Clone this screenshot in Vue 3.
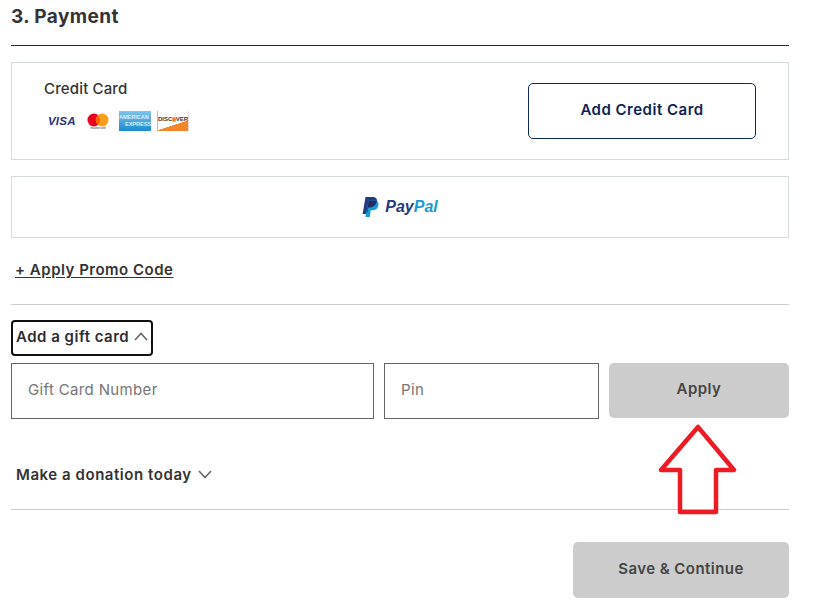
<script setup>
</script>

<template>
  <div class="page">
    <h2 class="title">3. Payment</h2>
    <div class="box card-box">
      <div class="card-info">
        <div class="card-label">Credit Card</div>
        <div class="logos">
          <span class="visa">VISA</span>
          <span class="mc">
            <svg width="22" height="14" viewBox="0 0 24 15">
              <circle cx="7.500" cy="7.500" r="7" fill="#eb001b" />
              <circle cx="16.500" cy="7.500" r="7" fill="#f79e1b" />
              <path d="M12 2.300a7 7 0 0 1 0 10.400a7 7 0 0 1 0-10.400z" fill="#ff5f00" />
            </svg>
            <span class="mc-text">mastercard</span>
          </span>
          <span class="amex"><span>AMERICAN</span><span class="amex-2">EXPRESS</span></span>
          <span class="discover">
            <span class="disc-text">DISC<i class="dot"></i>VER</span>
          </span>
        </div>
      </div>
      <button class="btn-outline">Add Credit Card</button>
    </div>
    <div class="box paypal-box">
      <svg width="17" height="20" viewBox="0 0 17 20">
        <path d="M3.500 0h6.500C14 0 15.600 2 15 5c-.7 3.600-3.200 5.400-6.600 5.400H6.300L5.200 17H.6z" fill="#253b80" />
        <path d="M6.500 3.500h6c3 0 4.500 1.800 3.900 4.700c-.6 3.200-2.800 5-5.900 5H8.700L7.800 20H3.400z" fill="#179bd7" />
        <path d="M6.500 3.500h6c1 0 1.700.2 2.400.6c-.8 3.900-3.300 6.300-6.500 6.300H6.300L5.500 15H4.900z" fill="#222d65" />
      </svg>
      <span class="pp"><b class="pp-a">Pay</b><b class="pp-b">Pal</b></span>
    </div>
    <a class="promo">+ Apply Promo Code</a>
    <hr class="rule" />
    <div class="toggle focused">
      <span>Add a gift card</span>
      <svg width="14" height="9" viewBox="0 0 14 9"><path d="M1 8l6-6.500 6 6.500" fill="none" stroke="#666" stroke-width="1.600" /></svg>
    </div>
    <div class="gift-row">
      <div class="field number">Gift Card Number</div>
      <div class="field pin">Pin</div>
      <button class="btn-grey apply">Apply</button>
    </div>
    <div class="toggle donate">
      <span>Make a donation today</span>
      <svg width="14" height="9" viewBox="0 0 14 9"><path d="M1 1l6 6.500 6-6.500" fill="none" stroke="#666" stroke-width="1.600" /></svg>
    </div>
    <hr class="rule rule-low" />
    <div class="actions">
      <button class="btn-grey save">Save &amp; Continue</button>
    </div>
    <svg class="arrow" width="86" height="96" viewBox="0 0 86 96">
      <path d="M41 3L77 46H59V88H23V46H4z" fill="none" stroke="#ed1c24" stroke-width="4.500" stroke-linejoin="round" />
    </svg>
  </div>
</template>

<style>
html, body { margin: 0; background: #fff; }
</style>

<style scoped>
.page {
  position: relative;
  width: 778px;
  height: 610px;
  margin-left: 11px;
  font-family: Inter, "Liberation Sans", sans-serif;
  color: #333;
}
.title {
  margin: 0;
  box-sizing: border-box;
  height: 46px;
  padding-top: 5px;
  font-size: 19px;
  line-height: 24px;
  font-weight: 700;
  letter-spacing: 0.4px;
  border-bottom: 1px solid #1c2a4a;
}
.box {
  box-sizing: border-box;
  border: 1px solid #d5dada;
  display: flex;
  align-items: center;
}
.card-box {
  margin-top: 16px;
  height: 98px;
  padding: 0 32px;
  justify-content: space-between;
}
.card-info { display: flex; flex-direction: column; padding-bottom: 12px; }
.card-label { font-size: 15px; font-weight: 500; line-height: 20px; letter-spacing: 0.15px; color: #333; }
.logos { display: flex; align-items: center; margin-top: 12px; height: 20px; }
.visa {
  font: italic 700 11.500px "Liberation Sans", sans-serif;
  color: #26337a;
  width: 26px;
  margin-left: 4px;
  letter-spacing: 0.2px;
}
.mc {
  margin-left: 12px;
  display: flex;
  flex-direction: column;
  align-items: center;
  width: 24px;
  height: 20px;
}
.mc svg { display: block; margin-top: 2px; }
.mc-text { font: 3px/3px "Liberation Sans", sans-serif; color: #333; white-space: nowrap; }
.amex {
  margin-left: 9px;
  width: 32px;
  height: 20px;
  background: linear-gradient(180deg, #7ec4ec, #1a8ad0);
  color: #d8f0fc;
  font: 700 5.500px/7px "Liberation Sans", sans-serif;
  display: flex;
  flex-direction: column;
  justify-content: center;
  white-space: nowrap;
  overflow: hidden;
}
.amex-2 { text-align: right; }
.discover {
  margin-left: 6px;
  box-sizing: border-box;
  width: 32px;
  height: 20px;
  border-left: 1px solid #bbb;
  border-right: 1px solid #ddd;
  background: linear-gradient(162deg, #fff 64%, #f4862a 65%);
  padding-top: 5px;
  overflow: hidden;
}
.disc-text { font: 700 6px/7px "Liberation Sans", sans-serif; color: #333; white-space: nowrap; display: flex; align-items: center; justify-content: center; }
.dot { width: 5px; height: 5px; border-radius: 50%; background: #f4862a; display: inline-block; }
.btn-outline {
  width: 228px;
  height: 56px;
  padding: 0 0 4px;
  background: #fff;
  border: 1px solid #0b2a5b;
  border-radius: 5px;
  font: 600 15px Inter, sans-serif;
  letter-spacing: 0.5px;
  color: #0b2355;
}
.paypal-box {
  margin-top: 16px;
  height: 62px;
  justify-content: center;
  gap: 6px;
}
.pp { font: italic 700 16px "Liberation Sans", sans-serif; }
.pp-a { color: #253b80; }
.pp-b { color: #179bd7; }
.promo {
  display: block;
  margin: 23px 0 0 4px;
  height: 18px;
  font-size: 15px;
  line-height: 18px;
  font-weight: 600;
  letter-spacing: 0.5px;
  color: #333;
  text-decoration: underline;
  text-underline-offset: 2px;
}
.rule { margin: 25px 0 0; border: 0; border-top: 1px solid #ccc; height: 0; }
.toggle {
  display: flex;
  align-items: center;
  gap: 5px;
  font-size: 15px;
  font-weight: 600;
  letter-spacing: 0.5px;
  color: #333;
  height: 36px;
  box-sizing: border-box;
}
.focused {
  margin-top: 15px;
  width: 142px;
  border: 2px solid #111;
  border-radius: 4px;
  padding: 0 0 3px 3px;
  color: #2c2c33;
}
.gift-row { display: flex; gap: 10px; margin-top: 7px; height: 56px; }
.field {
  box-sizing: border-box;
  border: 1px solid #666;
  display: flex;
  align-items: center;
  padding: 0 0 3px 16px;
  font-size: 15px;
  letter-spacing: 0.35px;
  color: #757575;
}
.number { width: 363px; }
.pin { width: 215px; }
.btn-grey {
  border: 0;
  background: #ccc;
  border-radius: 5px;
  padding: 0 0 4px;
  font: 600 15px Inter, sans-serif;
  letter-spacing: 0.45px;
  color: #444;
}
.apply { width: 180px; height: 55px; }
.donate { margin-top: 38px; padding: 0 5px 2px; gap: 6px; letter-spacing: 0.55px; }
.rule-low { margin-top: 16px; }
.actions { display: flex; justify-content: flex-end; margin-top: 32px; }
.save { width: 216px; height: 56px; }
.arrow { position: absolute; left: 646px; top: 424px; }
</style>
